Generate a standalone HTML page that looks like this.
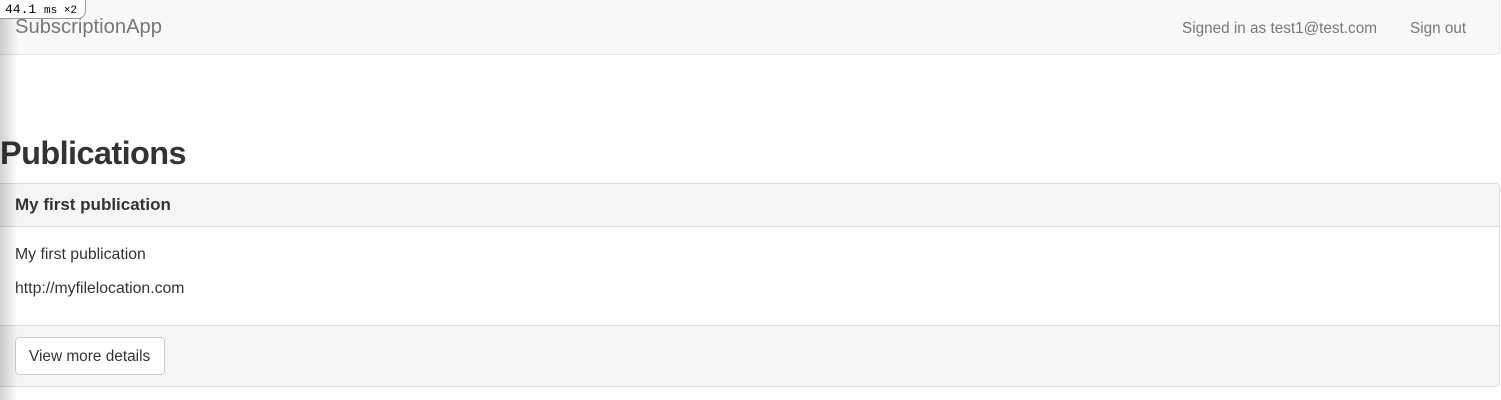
<!DOCTYPE html>
<html><head><style>
*{box-sizing:border-box;margin:0;padding:0}
body{width:1501px;height:400px;overflow:hidden;background:#fff;font-family:"Liberation Sans",sans-serif;color:#333;position:relative}
.nav{position:absolute;left:-5px;top:-5px;width:1505px;height:60px;background:#f8f8f8;border:1px solid #e7e7e7;border-radius:4px}
.brand{position:absolute;left:19px;top:20px;font-size:20.2px;color:#777}
.r{position:absolute;top:24px;font-size:15.3px;color:#777}
h1{position:absolute;left:0;top:135px;font-size:32.5px;font-weight:bold;color:#333;letter-spacing:-0.6px}
.panel{position:absolute;left:-5px;top:183px;width:1505px;height:204px;border:1px solid #ddd;border-radius:4px;overflow:hidden}
.ph{height:43px;background:#f5f5f5;border-bottom:1px solid #ddd;padding:11px 19px;font-size:17px;font-weight:bold;color:#333}
.t{position:absolute;left:19px;font-size:15.8px;color:#333}
.pf{position:absolute;left:0;top:141px;width:100%;height:62px;background:#f5f5f5;border-top:1px solid #ddd}
.btn{position:absolute;left:19px;top:11px;width:150px;height:38px;background:#fff;border:1px solid #ccc;border-radius:4px;font-size:15.4px;padding:10px 13px;color:#333}
.shade{position:absolute;left:0;top:0;width:18px;height:400px;background:linear-gradient(to right,rgba(0,0,0,.18),rgba(0,0,0,0))}
.badge{position:absolute;left:-2px;top:-2px;width:88px;height:21px;background:#fff;border:1px solid #999;border-radius:0 0 8px 0;font-family:"Liberation Mono",monospace;font-size:13px;padding:3px 0 0 6px;color:#000}
</style></head><body>
<div class="nav"><div class="brand">SubscriptionApp</div>
<div class="r" style="left:1186px">Signed in as test1@test.com</div>
<div class="r" style="left:1414px">Sign out</div></div>
<h1>Publications</h1>
<div class="panel"><div class="ph">My first publication</div>
<div class="t" style="top:62px">My first publication</div>
<div class="t" style="top:96px">http://myfilelocation.com</div>
<div class="pf"><div class="btn">View more details</div></div></div>
<div class="shade"></div>
<div class="badge">44.1 <span style="font-size:11px">ms ×2</span></div>
</body></html>
